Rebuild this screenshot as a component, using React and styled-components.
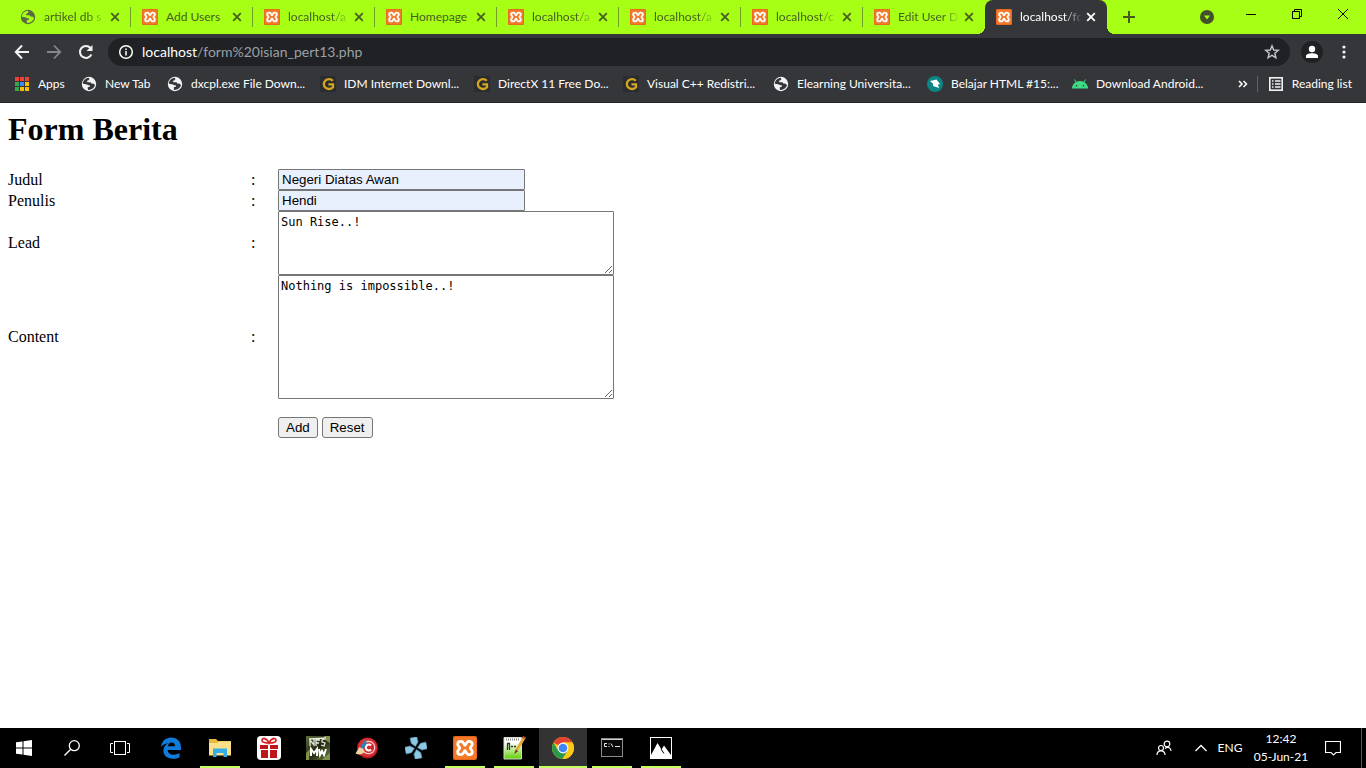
import React from "react";
import styled, { createGlobalStyle, css } from "styled-components";

const GlobalStyle = createGlobalStyle`
  *, *::before, *::after { box-sizing: border-box; }
  body { margin: 0; background: #fff; }
  button { font: inherit; color: inherit; }
`;

const ui = `Lato, "Segoe UI", sans-serif`;
const lime = "#a6ff14";

const Screen = styled.div`
  display: flex;
  flex-direction: column;
  min-height: 100vh;
`;

/* ---------- browser chrome ---------- */

const TabStrip = styled.header`
  display: flex;
  height: 34px;
  padding-left: 9px;
  background: ${lime};
  font: 12px/16px ${ui};
  color: #47601f;
`;

const Tab = styled.div`
  position: relative;
  display: flex;
  align-items: center;
  flex: 0 1 122px;
  min-width: 0;
  height: 34px;
  padding: 0 11px 0 11px;

  ${(p) =>
    p.$active
      ? css`
          border-radius: 8px 8px 0 0;
          background: #35363a;
          color: #fff;
          &::before,
          &::after {
            content: "";
            position: absolute;
            bottom: 0;
            width: 8px;
            height: 8px;
          }
          &::before {
            right: 100%;
            background: radial-gradient(circle at 0 0, transparent 8px, #35363a 8px);
          }
          &::after {
            left: 100%;
            background: radial-gradient(circle at 100% 0, transparent 8px, #35363a 8px);
          }
        `
      : css`
          &:not(:nth-last-child(2))::after {
            content: "";
            position: absolute;
            right: 0;
            top: 7px;
            width: 1px;
            height: 20px;
            background: #6f9f25;
          }
        `}
`;

const TabList = styled.div`
  display: flex;
  flex: 0 1 1098px;
  min-width: 0;
`;

const TabTitle = styled.span`
  flex: 1;
  min-width: 0;
  margin: 0 4px 0 8px;
  overflow: hidden;
  white-space: nowrap;
  mask-image: linear-gradient(to right, #000 44px, transparent 62px);
  ${(p) => p.$short && "mask-image: none;"}
`;

const PlainButton = styled.button`
  display: flex;
  align-items: center;
  justify-content: center;
  flex: none;
  width: ${(p) => p.$w}px;
  padding: 0;
  border: 0;
  background: none;
  color: inherit;
`;

const StripSpacer = styled.div`
  flex: 1;
`;

const WindowButtons = styled.div`
  display: flex;
  height: 28px;
  color: #000;
`;

const Toolbar = styled.div`
  display: flex;
  align-items: center;
  height: 36px;
  padding: 0 12px 0 6px;
  background: #35363a;
  color: #f1f3f4;
`;

const AddressBar = styled.div`
  display: flex;
  align-items: center;
  flex: 1;
  height: 28px;
  margin: 0 6px 0 6px;
  padding: 0 10px;
  border-radius: 14px;
  background: #202124;
`;

const Url = styled.div`
  flex: 1;
  margin-left: 8px;
  font: 14px/20px ${ui};
  color: #9aa0a6;
  span { color: #fff; }
`;

const Avatar = styled(PlainButton)`
  height: 22px;
  margin: 0 11px 0 5px;
  border-radius: 50%;
  background: #202124;
`;

const BookmarksBar = styled.nav`
  display: flex;
  align-items: center;
  height: 33px;
  padding: 0 14px 4px;
  border-bottom: 1px solid #232427;
  background: #35363a;
  font: 12px/16px ${ui};
  color: #fff;
`;

const Bookmark = styled.a`
  display: flex;
  align-items: center;
  gap: 8px;
  flex: 0 0 ${(p) => p.$w}px;
  min-width: 0;
  white-space: nowrap;
  color: inherit;
  text-decoration: none;
  svg { flex: none; }
`;

const BarDivider = styled.div`
  width: 1px;
  height: 16px;
  margin: 0 10px 0 8px;
  background: #5f6368;
`;

const ReadingList = styled.button`
  display: flex;
  align-items: center;
  gap: 8px;
  padding: 0;
  border: 0;
  background: none;
  white-space: nowrap;
`;

/* ---------- web page ---------- */

const Page = styled.main`
  flex: 1;
  padding: 8px;
  background: #fff;
  color: #000;
  font: 16px/18px "Liberation Serif", "Times New Roman", serif;
`;

const Heading = styled.h1`
  margin: 0 0 21px;
  font-size: 32px;
  line-height: 37px;
`;

const FormTable = styled.table`
  border-collapse: collapse;
  td, th { padding: 0; font-weight: normal; text-align: left; vertical-align: middle; }
`;

const NameCell = styled.th`
  width: 243px;
`;

const ColonCell = styled.td`
  width: 27px;
`;

const TextInput = styled.input`
  display: block;
  width: 247px;
  height: 21px;
  padding: 1px 3px;
  border: 1px solid #767676;
  border-radius: 1px;
  background: #e8f0fe;
  color: #000;
  font-family: "Liberation Sans", Arial, sans-serif;
`;

const TextBox = styled.textarea`
  display: block;
  width: 336px;
  height: ${(p) => p.$h}px;
  padding: 3px 2px 2px;
  border: 1px solid #767676;
  border-radius: 1px;
  background: #fff;
  color: #000;
  font: 12px/15px "DejaVu Sans Mono", Consolas, monospace;
`;

const Actions = styled.div`
  display: flex;
  gap: 4px;
  padding-top: 18px;
`;

const FormButton = styled.button`
  height: 21px;
  padding: 0 7px;
  border: 1px solid #767676;
  border-radius: 3px;
  background: #efefef;
  color: #000;
  font: small-caption;
  font-size: smaller;
  font-family: "Liberation Sans", Arial, sans-serif;
`;

/* ---------- taskbar ---------- */

const Taskbar = styled.footer`
  display: flex;
  height: 40px;
  background: #000;
  color: #fff;
  font: 12px/18px ${ui};
`;

const SystemButtons = styled.div`
  display: flex;
  margin-right: 3px;
`;

const Apps = styled.div`
  display: flex;
  gap: 1px;
  flex: 1;
`;

const TaskButton = styled(PlainButton)`
  position: relative;
  height: 40px;
  background: ${(p) => (p.$active ? "#333" : "none")};
  ${(p) =>
    (p.$open || p.$active) &&
    css`
      &::after {
        content: "";
        position: absolute;
        bottom: 0;
        left: ${p.$active ? 0 : 4}px;
        right: ${p.$active ? 0 : 4}px;
        height: 2px;
        background: #c4ff62;
      }
    `}
`;

const Clock = styled.div`
  width: 74px;
  padding-top: 2px;
  text-align: center;
`;

const TrayGap = styled.div`
  width: 13px;
`;

const ShowDesktop = styled.button`
  width: 5px;
  padding: 0;
  border: 0;
  border-left: 1px solid #555;
  background: none;
`;

/* ---------- icons ---------- */

const Svg = ({ s = 16, w = s, h = s, box, children, ...rest }) => (
  <svg width={w} height={h} viewBox={box || `0 0 ${w} ${h}`} fill="none" aria-hidden="true" {...rest}>
    {children}
  </svg>
);

const Xampp = ({ s = 16 }) => (
  <Svg s={s} box="0 0 24 24">
    <rect width="24" height="24" rx="2" fill="#e8641b" />
    <rect x="1" y="1" width="22" height="22" rx="2" fill="#f27a2a" />
    <path
      d="M12 9.300C10.800 9.300 11 5.400 8 5.400C5.800 5.400 4.700 6.600 4.700 8.300C4.700 10.200 6.700 10.600 6.700 12C6.700 13.400 4.700 13.800 4.700 15.700C4.700 17.400 5.800 18.600 8 18.600C11 18.600 10.800 14.700 12 14.700C13.200 14.700 13 18.600 16 18.600C18.200 18.600 19.300 17.400 19.300 15.700C19.300 13.800 17.300 13.400 17.300 12C17.300 10.600 19.300 10.200 19.300 8.300C19.300 6.600 18.200 5.400 16 5.400C13 5.400 13.200 9.300 12 9.300Z"
      stroke="#fff"
      strokeWidth="2.800"
      strokeLinejoin="round"
    />
  </Svg>
);

const Globe = ({ color = "#f1f3f4", hole = "#35363a" }) => (
  <Svg>
    <circle cx="8" cy="8" r="7.200" fill={color} />
    <path
      d="M7.500 1.800C4.300 2.300 2 4.700 1.900 7.700L5 8.300C6.300 8.600 7 9.400 8.300 9.300C9.500 9.300 9.300 10.600 8.200 11L6.700 11.300L7 13.900C10.200 14.300 13.300 12 14 9L12.300 7.600L10.700 7.700L9.500 6.200L6.700 6.300L5.600 5.100L7.500 4.200L8.500 2.900Z"
      fill={hole}
    />
  </Svg>
);

const Close = ({ s = 10 }) => (
  <Svg s={s} box="0 0 10 10">
    <path d="M1.200 1.200L8.800 8.800M8.800 1.200L1.200 8.800" stroke="currentColor" strokeWidth="1.800" />
  </Svg>
);

const AppsGrid = () => {
  const colors = ["#ea4335", "#ea4335", "#ea4335", "#34a853", "#4285f4", "#fbbc04", "#34a853", "#fbbc04", "#fbbc04"];
  return (
    <Svg>
      {colors.map((c, i) => (
        <rect key={i} x={1 + (i % 3) * 5} y={1 + Math.floor(i / 3) * 5} width="4" height="4" fill={c} />
      ))}
    </Svg>
  );
};

const GetIntoPc = () => (
  <Svg>
    <rect width="16" height="16" fill="#2b2c2e" />
    <path d="M12.800 4.700A5.200 4.900 0 1 0 13 11.300V8.300H8.400" stroke="#d4a521" strokeWidth="2.300" />
  </Svg>
);

const Belajar = () => (
  <Svg>
    <circle cx="8" cy="8" r="8" fill="#0b8585" />
    <path d="M3 5L9.500 3.500L13 8L11 8.500L12 12L6 10L6 7.700Z" fill="#fff" />
  </Svg>
);

const Android = () => (
  <Svg>
    <path d="M0 12.500A8 7.500 0 0 1 16 12.500Z" fill="#3ddc84" />
    <path d="M2.500 3.500L4.500 7M13.500 3.500L11.500 7" stroke="#3ddc84" />
    <circle cx="4.500" cy="9.700" r=".8" fill="#35363a" />
    <circle cx="11.500" cy="9.700" r=".8" fill="#35363a" />
  </Svg>
);

const StartIcon = () => (
  <Svg>
    <path d="M0 2.300L6.500 1.400V7.500H0ZM7.500 1.200L16 0V7.500H7.500ZM0 8.500H6.500V14.600L0 13.700ZM7.500 8.500H16V16L7.500 14.800Z" fill="#fff" />
  </Svg>
);

const SearchIcon = () => (
  <Svg>
    <circle cx="10.300" cy="5.700" r="5" stroke="#fff" strokeWidth="1.300" />
    <path d="M6.700 9.300L.5 15.500" stroke="#fff" strokeWidth="1.300" />
  </Svg>
);

const TaskView = () => (
  <Svg w={20} h={16}>
    <rect x="4.500" y="1.500" width="11" height="13" stroke="#fff" />
    <path d="M3 3.500H.5V12.500H3M17 3.500H19.500V12.500H17" stroke="#fff" />
  </Svg>
);

const Edge = () => (
  <Svg w={22} h={22}>
    <path
      d="M1 10C1.800 4 5.600.5 11.300.5C17.500.5 21 4.900 21 10.500V13H7.700C7.900 16.300 10.500 17.700 13.500 17.700C15.900 17.700 17.900 17 19.500 16V20.200C17.600 21.200 15.300 21.700 12.700 21.700C7 21.700 3.400 18.300 3.400 13.500C3.400 10.300 5.300 7.700 8.200 6.200C5 6.500 2.600 7.900 1 10ZM7.900 9.200H15.100C15.100 6.800 13.700 5.500 11.600 5.500C9.600 5.500 8.200 7 7.900 9.200Z"
      fill="#0f7bdb"
    />
  </Svg>
);

const Explorer = () => (
  <Svg w={22} h={20}>
    <path d="M0 1.500Q0 1 .5 1H7L9 3H21.500Q22 3 22 3.500V17H0Z" fill="#e8b83f" />
    <path d="M0 5H8L10 3.500H22V17.500H0Z" fill="#fde08b" />
    <path d="M4 19V10.500H18V19H14.500V15H7.500V19Z" fill="#35aee6" />
  </Svg>
);

const Gift = () => (
  <Svg s={24}>
    <rect width="24" height="24" rx="4" fill="#fff" />
    <path d="M3 9H11V13H3ZM13 9H21V13H13ZM4 14H11V22H4ZM13 14H20V22H13Z" fill="#bd171b" />
    <path d="M12 7C10 2 5 1 5 4.500C5 6.500 9 7 12 7C15 7 19 6.500 19 4.500C19 1 14 2 12 7Z" stroke="#d81e20" strokeWidth="1.700" />
  </Svg>
);

const Nfs = () => (
  <Svg s={24}>
    <defs>
      <linearGradient id="nfs" x2="1" y2="1">
        <stop stopColor="#5d713a" />
        <stop offset=".5" stopColor="#20260f" />
        <stop offset="1" stopColor="#708444" />
      </linearGradient>
    </defs>
    <rect width="24" height="24" fill="url(#nfs)" />
    <path d="M0 17L4 13L3 24H0ZM18 0H24V7L19 4ZM19 21L24 17V24H16Z" fill="#7f924c" />
    <path d="M4 10V4L8 9V3M10 10V4H14M10 7H13M19 3L16 4V6L19 7L18 10L15 9M3 3L20 2" stroke="#e5e8df" strokeWidth="1.300" />
    <path d="M5 20V13L8 17L11 13V20M13 13L14 19L16 15L18 19L20 13" stroke="#fff" strokeWidth="2" />
  </Svg>
);

const CCleaner = () => (
  <Svg s={24}>
    <circle cx="12.500" cy="12" r="10.500" fill="#a9191d" />
    <circle cx="12.500" cy="11.500" r="9.500" fill="#da3036" />
    <circle cx="13.500" cy="11.500" r="6.800" fill="#f4d9d9" />
    <circle cx="13.500" cy="11.500" r="5.600" fill="#d3252b" />
    <path d="M16 9.500A3 3 0 1 0 16 13.500" stroke="#fff" strokeWidth="2.200" />
    <path d="M11 2.500L11.500 8L8.500 13L5.500 11Z" fill="#2a83b8" />
    <path d="M4.500 11L9.500 14.500C8.500 18 5 20 .5 17.500L2 15Z" fill="#efd4a4" />
  </Svg>
);

const Ppsspp = () => (
  <Svg s={22}>
    <g transform="rotate(-14 11 11)" fill="#8dc8e3" stroke="#477d9c" strokeWidth=".6">
      <path d="M7.500 0H14.500V5.500L11 9.500L7.500 5.500Z" />
      <path d="M22 7.500V14.500H16.500L12.500 11L16.500 7.500Z" />
      <path d="M14.500 22H7.500V16.500L11 12.500L14.500 16.500Z" />
      <path d="M0 14.500V7.500H5.500L9.500 11L5.500 14.500Z" />
    </g>
  </Svg>
);

const NotepadPP = () => (
  <Svg s={24}>
    <defs>
      <linearGradient id="npp" x2="0" y2="1">
        <stop offset=".25" stopColor="#fff" />
        <stop offset="1" stopColor="#5fd000" />
      </linearGradient>
    </defs>
    <path d="M2 1.500H19.500V23H2Z" fill="url(#npp)" stroke="#d5d9d0" />
    <path d="M4 3.500H18" stroke="#888" strokeDasharray="1 1" strokeWidth="2" />
    <path d="M5.500 14V7.500H7.500V14M9 10.500H11M12 10.500H14" stroke="#263618" strokeWidth="1.300" />
    <path d="M22.500 1L13.500 16" stroke="#ebaa37" strokeWidth="3" />
    <path d="M14 13.500L12.200 18L16 15.300Z" fill="#573c21" />
    <path d="M21 1L23 2.500" stroke="#cf4c2f" strokeWidth="2" />
  </Svg>
);

const Chrome = () => (
  <Svg s={24}>
    <circle cx="12" cy="12" r="11" fill="#fbc918" />
    <path d="M12 12L2.500 6.500A11 11 0 0 1 21.500 6.500H12Z" fill="#e34133" />
    <path d="M2.500 6.500A11 11 0 0 0 11.500 23L16.700 14.800L12 12L7.200 14.700Z" fill="#279b4b" />
    <path d="M12 6.500H21.500A11 11 0 0 1 11.500 23L16.700 14.800Z" fill="#fbc918" />
    <circle cx="12" cy="12" r="5.400" fill="#fff" />
    <circle cx="12" cy="12" r="4.300" fill="#4285f4" />
  </Svg>
);

const Cmd = () => (
  <Svg w={22} h={20}>
    <rect x=".5" y=".5" width="21" height="18" fill="#080808" stroke="#8c8c8c" />
    <path d="M1 1.500H21" stroke="#cfcfcf" />
    <path d="M6 5.500H3.500V8.500H6M8 5.500V6.500M8 8V9M10 5.500L12 9M14 8.500H19" stroke="#e7e7e7" />
  </Svg>
);

const Photos = () => (
  <Svg s={22}>
    <rect x=".5" y=".5" width="21" height="21" fill="#000" stroke="#fff" />
    <path d="M1 18L7.500 6L11.500 12.500L14 8.500L21 18V21H1Z" fill="#fff" />
    <path d="M11 12L14 16.500" stroke="#000" />
  </Svg>
);

/* ---------- data ---------- */

const tabs = [
  { title: "artikel db s", globe: true },
  { title: "Add Users", short: true },
  { title: "localhost/a" },
  { title: "Homepage", short: true },
  { title: "localhost/a" },
  { title: "localhost/a" },
  { title: "localhost/c" },
  { title: "Edit User D" },
  { title: "localhost/fo", active: true },
];

const bookmarks = [
  { label: "Apps", w: 67, icon: <AppsGrid /> },
  { label: "New Tab", w: 86, icon: <Globe /> },
  { label: "dxcpl.exe File Down...", w: 153, icon: <Globe /> },
  { label: "IDM Internet Downl...", w: 154, icon: <GetIntoPc /> },
  { label: "DirectX 11 Free Do...", w: 149, icon: <GetIntoPc /> },
  { label: "Visual C++ Redistri...", w: 150, icon: <GetIntoPc /> },
  { label: "Elearning Universita...", w: 154, icon: <Globe /> },
  { label: "Belajar HTML #15:...", w: 145, icon: <Belajar /> },
  { label: "Download Android...", w: 133, icon: <Android /> },
];

const apps = [
  { name: "Edge", icon: <Edge /> },
  { name: "File Explorer", icon: <Explorer />, open: true },
  { name: "Gift", icon: <Gift /> },
  { name: "NFS MW", icon: <Nfs /> },
  { name: "CCleaner", icon: <CCleaner /> },
  { name: "PPSSPP", icon: <Ppsspp /> },
  { name: "XAMPP", icon: <Xampp s={24} />, open: true },
  { name: "Notepad++", icon: <NotepadPP />, open: true },
  { name: "Chrome", icon: <Chrome />, active: true },
  { name: "Command Prompt", icon: <Cmd />, open: true },
  { name: "Photos", icon: <Photos />, open: true },
];

const Row = ({ id, label, children }) => (
  <tr>
    <NameCell scope="row"><label htmlFor={id}>{label}</label></NameCell>
    <ColonCell>:</ColonCell>
    <td>{children}</td>
  </tr>
);

export default function App() {
  return (
    <Screen>
      <GlobalStyle />
      <TabStrip>
        <TabList>
          {tabs.map((t, i) => (
            <Tab key={i} $active={t.active}>
              {t.globe ? <Globe color="#5b6b40" hole={lime} /> : <Xampp />}
              <TabTitle $short={t.short}>{t.title}</TabTitle>
              <PlainButton $w={10} aria-label="Close tab"><Close /></PlainButton>
            </Tab>
          ))}
        </TabList>
        <PlainButton $w={44} aria-label="New tab">
          <Svg s={12}><path d="M6 0V12M0 6H12" stroke="#465a20" strokeWidth="2" /></Svg>
        </PlainButton>
        <StripSpacer />
        <PlainButton $w={42} aria-label="Search tabs">
          <Svg s={14}>
            <circle cx="7" cy="7" r="7" fill="#43502c" />
            <path d="M4 5.500H10L7 9.500Z" fill={lime} />
          </Svg>
        </PlainButton>
        <WindowButtons>
          <PlainButton $w={46} aria-label="Minimize"><Svg s={10}><path d="M0 5.500H10" stroke="#000" /></Svg></PlainButton>
          <PlainButton $w={46} aria-label="Restore">
            <Svg s={10}><path d="M.5 2.500H7.500V9.500H.5ZM2.500 2.500V.5H9.500V7.500H7.500" stroke="#000" /></Svg>
          </PlainButton>
          <PlainButton $w={46} aria-label="Close window"><Svg s={10}><path d="M0 0L10 10M10 0L0 10" stroke="#000" /></Svg></PlainButton>
        </WindowButtons>
      </TabStrip>

      <Toolbar>
        <PlainButton $w={32} aria-label="Back">
          <Svg><path d="M15 8H2M8 1.500L1.800 8L8 14.500" stroke="currentColor" strokeWidth="2" /></Svg>
        </PlainButton>
        <PlainButton $w={32} aria-label="Forward">
          <Svg><path d="M1 8H14M8 1.500L14.200 8L8 14.500" stroke="#85878b" strokeWidth="1.800" /></Svg>
        </PlainButton>
        <PlainButton $w={32} aria-label="Reload">
          <Svg>
            <path d="M13.400 10.500A6 6 0 1 1 12.500 4" stroke="currentColor" strokeWidth="2" />
            <path d="M14.500 1V7H8.500Z" fill="currentColor" />
          </Svg>
        </PlainButton>
        <AddressBar>
          <Svg>
            <circle cx="8" cy="8" r="6.300" stroke="#fff" strokeWidth="1.500" />
            <path d="M8 7V11.500M8 4.500V6" stroke="#fff" strokeWidth="1.500" />
          </Svg>
          <Url><span>localhost</span>/form%20isian_pert13.php</Url>
          <PlainButton $w={16} aria-label="Bookmark this page">
            <Svg><path d="M8 1.800L9.700 6L14.300 6.300L10.800 9.200L11.900 13.700L8 11.300L4.100 13.700L5.200 9.200L1.700 6.300L6.300 6Z" stroke="#c4c7ca" strokeWidth="1.400" /></Svg>
          </PlainButton>
        </AddressBar>
        <Avatar $w={22} aria-label="Profile">
          <Svg s={14}><circle cx="7" cy="4" r="3.200" fill="#fff" /><path d="M1 13V11C1 9 4.500 8.200 7 8.200S13 9 13 11V13Z" fill="#fff" /></Svg>
        </Avatar>
        <PlainButton $w={20} aria-label="Menu">
          <Svg><circle cx="8" cy="3" r="1.600" fill="#f1f3f4" /><circle cx="8" cy="8" r="1.600" fill="#f1f3f4" /><circle cx="8" cy="13" r="1.600" fill="#f1f3f4" /></Svg>
        </PlainButton>
      </Toolbar>

      <BookmarksBar>
        {bookmarks.map((b) => (
          <Bookmark key={b.label} href="#" $w={b.w}>{b.icon}{b.label}</Bookmark>
        ))}
        <StripSpacer />
        <PlainButton $w={12} aria-label="More bookmarks">
          <Svg w={10} h={8}><path d="M1 1L4 4L1 7M5.500 1L8.500 4L5.500 7" stroke="#fff" strokeWidth="1.500" /></Svg>
        </PlainButton>
        <BarDivider />
        <ReadingList>
          <Svg>
            <rect x="1.800" y="1.800" width="12.400" height="12.400" stroke="#f1f3f4" strokeWidth="1.600" />
            <path d="M4 5H5.500M7 5H12.500M4 8H5.500M7 8H12.500M4 11H5.500M7 11H12.500" stroke="#f1f3f4" strokeWidth="1.400" />
          </Svg>
          Reading list
        </ReadingList>
      </BookmarksBar>

      <Page>
        <Heading>Form Berita</Heading>
        <form onSubmit={(e) => e.preventDefault()}>
          <FormTable>
            <tbody>
              <Row id="judul" label="Judul"><TextInput id="judul" defaultValue="Negeri Diatas Awan" /></Row>
              <Row id="penulis" label="Penulis"><TextInput id="penulis" defaultValue="Hendi" /></Row>
              <Row id="lead" label="Lead"><TextBox id="lead" $h={64} spellCheck={false} defaultValue="Sun Rise..!" /></Row>
              <Row id="content" label="Content"><TextBox id="content" $h={124} spellCheck={false} defaultValue="Nothing is impossible..!" /></Row>
              <tr>
                <td />
                <td />
                <td>
                  <Actions>
                    <FormButton type="submit">Add</FormButton>
                    <FormButton type="reset">Reset</FormButton>
                  </Actions>
                </td>
              </tr>
            </tbody>
          </FormTable>
        </form>
      </Page>

      <Taskbar>
        <SystemButtons>
          <TaskButton $w={48} aria-label="Start"><StartIcon /></TaskButton>
          <TaskButton $w={48} aria-label="Search"><SearchIcon /></TaskButton>
          <TaskButton $w={48} aria-label="Task view"><TaskView /></TaskButton>
        </SystemButtons>
        <Apps>
          {apps.map((a) => (
            <TaskButton key={a.name} $w={48} $open={a.open} $active={a.active} aria-label={a.name}>{a.icon}</TaskButton>
          ))}
        </Apps>
        <PlainButton $w={44} aria-label="People">
          <Svg>
            <circle cx="11" cy="4" r="2.800" stroke="#fff" strokeWidth="1.200" />
            <circle cx="5" cy="8" r="2.500" stroke="#fff" strokeWidth="1.200" />
            <path d="M1 15C1 9.500 9 9.500 9 15M9 8.500C12 6 15 8 15 11" stroke="#fff" strokeWidth="1.200" />
          </Svg>
        </PlainButton>
        <PlainButton $w={30} aria-label="Show hidden icons">
          <Svg w={12} h={8}><path d="M.5 7L6 1.500L11.500 7" stroke="#fff" strokeWidth="1.300" /></Svg>
        </PlainButton>
        <PlainButton $w={28} aria-label="Input language">ENG</PlainButton>
        <Clock>12:42<br />05-Jun-21</Clock>
        <PlainButton $w={30} aria-label="Notifications">
          <Svg><path d="M.5 1.500H15.500V12.500H11L8.500 15L6 12.500H.5Z" stroke="#fff" strokeWidth="1.200" /></Svg>
        </PlainButton>
        <TrayGap />
        <ShowDesktop aria-label="Show desktop" />
      </Taskbar>
    </Screen>
  );
}
